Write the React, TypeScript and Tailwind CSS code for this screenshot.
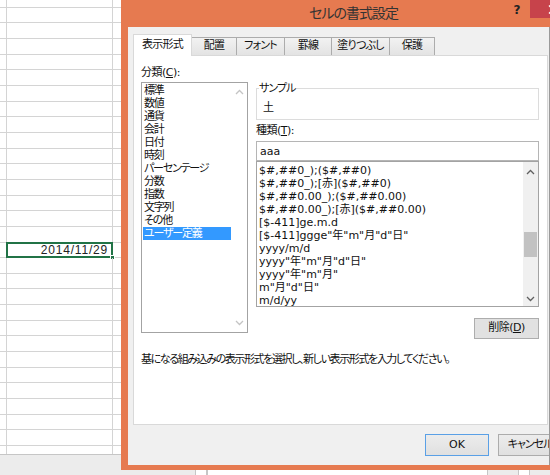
import React from "react";

const categories = [
  "標準",
  "数値",
  "通貨",
  "会計",
  "日付",
  "時刻",
  "パーセンテージ",
  "分数",
  "指数",
  "文字列",
  "その他",
  "ユーザー定義",
];

const formats = [
  "$#,##0_);($#,##0)",
  "$#,##0_);[赤]($#,##0)",
  "$#,##0.00_);($#,##0.00)",
  "$#,##0.00_);[赤]($#,##0.00)",
  "[$-411]ge.m.d",
  '[$-411]ggge"年"m"月"d"日"',
  "yyyy/m/d",
  'yyyy"年"m"月"d"日"',
  'yyyy"年"m"月"',
  'm"月"d"日"',
  "m/d/yy",
];

const tabs = [
  { label: "配置", w: "w-[45px]" },
  { label: "フォント", w: "w-[48px]" },
  { label: "罫線", w: "w-[47px]" },
  { label: "塗りつぶし", w: "w-[58px]" },
  { label: "保護", w: "w-[45px]" },
];

function Chevron({ up, className }: { up?: boolean; className: string }) {
  return (
    <svg width="9" height="6" viewBox="0 0 9 6" className={className}>
      <polyline
        points={up ? "1,5 4.5,1.5 8,5" : "1,1 4.5,4.5 8,1"}
        fill="none"
        stroke="currentColor"
        strokeWidth="1.3"
      />
    </svg>
  );
}

function Sheet() {
  const rows = Array.from({ length: 29 }, (_, i) => i);
  return (
    <div className="flex h-[455px] flex-col border-b border-[#c6c6c6] bg-white">
      {rows.map((i) => (
        <div
          key={i}
          className={
            "flex shrink-0 border-b border-[#d4d4d4] " +
            (i === 0 ? "h-[7.67px]" : "h-[15.67px]")
          }
        >
          <div className="w-[7px] border-r border-[#d4d4d4]" />
          <div className="relative w-[106px] border-r border-[#d4d4d4]">
            {i === 16 && (
              <>
                <div className="pr-[4px] text-right font-['Liberation_Sans',sans-serif] text-[12px] leading-[15px] tracking-[0.8px] text-[#222]">
                  2014/11/29
                </div>
                {/* active cell outline */}
                <div className="absolute -top-[1px] -right-[1px] -bottom-[1px] -left-[1px] border-2 border-[#217346]" />
                <div className="absolute -right-[3px] -bottom-[3px] h-[5px] w-[5px] border border-white bg-[#217346]" />
              </>
            )}
          </div>
          <div className="flex-1" />
        </div>
      ))}
      <div className="flex flex-1">
        <div className="w-[7px] border-r border-[#d4d4d4]" />
        <div className="w-[106px] border-r border-[#d4d4d4]" />
      </div>
    </div>
  );
}

function Dialog() {
  return (
    <div className="absolute top-0 left-[121px] flex h-[470px] w-[460px] flex-col bg-[#e67a50]">
      {/* title bar */}
      <div className="flex h-[27px] shrink-0 items-start">
        <span className="mt-[5px] ml-[188px] text-[14px] leading-[17px] tracking-[-1px] text-[#333]">
          セルの書式設定
        </span>
        <span className="flex-1" />
        <span className="mt-[3px] mr-[7px] w-[12px] text-center text-[12px] leading-[15px] font-bold text-[#222]">
          ?
        </span>
        <div className="mr-[6px] flex h-[18px] w-[45px] items-center justify-center bg-[#c7434b]">
          <svg width="10" height="9" viewBox="0 0 10 9" className="text-white">
            <path d="M1 0.5 L9 8.5 M9 0.5 L1 8.5" stroke="currentColor" strokeWidth="1.4" />
          </svg>
        </div>
      </div>

      {/* client area */}
      <div className="ml-[7px] w-[422px] flex-1 overflow-hidden border-r border-[#9a9a9a] bg-[#f0f0f0] text-[#111]">
        <div className="relative z-10 mt-[7px] ml-[5px] flex h-[21px] items-end text-[11px] tracking-[-0.8px]">
          <div className="-mb-px flex h-[22px] w-[59px] items-center justify-center border border-b-0 border-[#d9d9d9] bg-white">
            表示形式
          </div>
          {tabs.map((t) => (
            <div
              key={t.label}
              className={
                "flex h-[18px] items-center justify-center border-t border-r border-[#acacac] bg-gradient-to-b from-[#f2f2f2] to-[#e3e3e3] " +
                t.w
              }
            >
              {t.label}
            </div>
          ))}
        </div>

        <div className="ml-[5px] flex h-[370px] w-[415px] flex-col border border-[#d9d9d9] bg-white pt-[10px] pl-[7px] text-[11px]">
          <div className="flex items-start gap-[8px]">
            {/* category */}
            <div className="flex w-[107px] flex-col">
              <div className="h-[13px] leading-[13px] tracking-[-0.5px]">
                分類(<span className="underline">C</span>):
              </div>
              <div className="mt-[3px] flex h-[251px] border border-[#a3a3a3]">
                <div className="flex flex-1 flex-col pt-px pl-px tracking-[-1.2px]">
                  {categories.map((c, i) => (
                    <div
                      key={c}
                      className={
                        "h-[13px] pl-[1px] leading-[13px] " +
                        (i === categories.length - 1 ? "bg-[#3399ff] text-white" : "")
                      }
                    >
                      {c}
                    </div>
                  ))}
                </div>
                <div className="flex w-[16px] flex-col justify-between">
                  <div className="flex h-[18px] items-center justify-center">
                    <Chevron up className="text-[#c4c4c4]" />
                  </div>
                  <div className="flex h-[18px] items-center justify-center">
                    <Chevron className="text-[#c4c4c4]" />
                  </div>
                </div>
              </div>
            </div>

            {/* type */}
            <div className="mt-[16px] flex w-[283px] flex-col">
              <fieldset className="m-0 border border-[#dcdcdc] pb-[5px] pl-[6px]">
                <legend className="-ml-[4px] p-0 leading-[13px] tracking-[-1px]">サンプル</legend>
                <div className="mt-[6px] leading-[13px]">土</div>
              </fieldset>
              <div className="mt-[4px] leading-[13px] tracking-[-0.5px]">
                種類(<span className="underline">T</span>):
              </div>
              <input
                readOnly
                value="aaa"
                className="mt-[4px] h-[20px] w-full border border-[#b5b5b5] bg-white px-[3px] text-[11px] outline-none"
              />
              <div className="flex h-[146px] border border-[#a3a3a3]">
                <div className="flex flex-1 flex-col pt-[2px] pl-[2px]">
                  {formats.map((f) => (
                    <div key={f} className="h-[13px] leading-[13px] whitespace-nowrap">
                      {f}
                    </div>
                  ))}
                </div>
                <div className="flex w-[15px] flex-col bg-[#f0f0f0]">
                  <div className="flex h-[20px] items-center justify-center">
                    <Chevron up className="text-[#606060]" />
                  </div>
                  <div className="mx-px mt-[50px] h-[25px] bg-[#c2c2c2]" />
                  <div className="flex-1" />
                  <div className="flex h-[14px] items-center justify-center">
                    <Chevron className="text-[#606060]" />
                  </div>
                </div>
              </div>
              <button className="mt-[11px] flex h-[21px] w-[65px] items-center justify-center self-end border border-[#adadad] bg-[#e1e1e1] tracking-[-0.5px]">
                削除(<span className="underline">D</span>)
              </button>
            </div>
          </div>
          <p className="mt-[14px] leading-[13px] tracking-[-1.4px]">
            基になる組み込みの表示形式を選択し、新しい表示形式を入力してください。
          </p>
        </div>

        <div className="mt-[9px] ml-[297px] flex gap-[9px] text-[11px]">
          <button className="flex h-[22px] w-[64px] shrink-0 items-center justify-center border border-[#5aa0e6] bg-gradient-to-b from-[#ececec] to-[#e0e0e0]">
            OK
          </button>
          <button className="flex h-[22px] w-[64px] shrink-0 items-center justify-center border border-[#acacac] bg-gradient-to-b from-[#ececec] to-[#e0e0e0] tracking-[-1px]">
            キャンセル
          </button>
        </div>
      </div>
      <div className="h-[5px] shrink-0" />
    </div>
  );
}

export default function App() {
  return (
    <div className="relative h-[475px] w-[550px] overflow-hidden bg-[#ececec] font-['DejaVu_Sans','Noto_Sans_CJK_JP',sans-serif] [font-feature-settings:'palt']">
      <Sheet />
      <div className="flex gap-0 pt-[14px] pl-[195px]">
        <div className="h-[8px] w-[12px] border border-[#c6c6c6] bg-white" />
        <div className="h-[8px] w-[281px] border border-[#c6c6c6] bg-white" />
        <div className="ml-[30px] h-[8px] w-[12px] border border-[#c6c6c6] bg-white" />
      </div>
      <Dialog />
    </div>
  );
}
